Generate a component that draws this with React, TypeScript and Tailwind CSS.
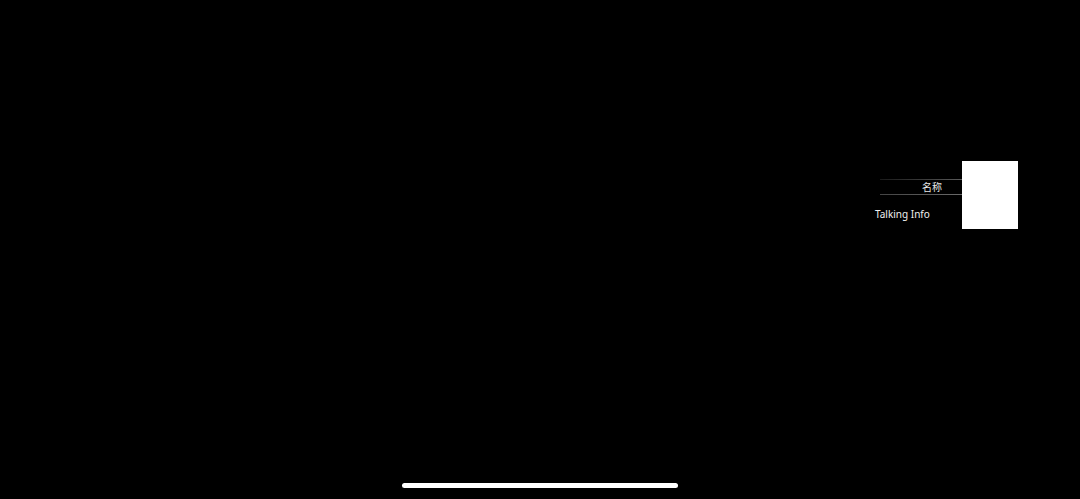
import React from "react";

export default function App() {
  return (
    <div
      className="w-[1080px] h-[499px] bg-black flex flex-col overflow-hidden"
      style={{ fontFamily: '"Noto Sans", "Noto Sans CJK SC", sans-serif' }}
    >
      <div className="flex justify-end pt-[161px] pr-[62px]">
        <div className="w-[88px] flex flex-col pt-[18px]">
          <div className="ml-[6px] h-px bg-gradient-to-r from-[#1a1a1a] to-[#5a5a5a]" />
          <div className="h-[14px] pr-[20px] text-right text-[10px] leading-[14px] text-[#e6e6e6]">
            名称
          </div>
          <div className="ml-[6px] h-px bg-gradient-to-r from-[#444444] to-[#6a6a6a]" />
          <div className="mt-[12px] pl-[1px] text-[10px] leading-[14px] text-[#f0f0f0] whitespace-nowrap">
            Talking Info
          </div>
        </div>
        <div className="w-[56px] h-[68px] bg-white" />
      </div>
      <div className="mt-auto pb-[11px] flex justify-center">
        <div className="w-[276px] h-[5px] rounded-full bg-white" />
      </div>
    </div>
  );
}
